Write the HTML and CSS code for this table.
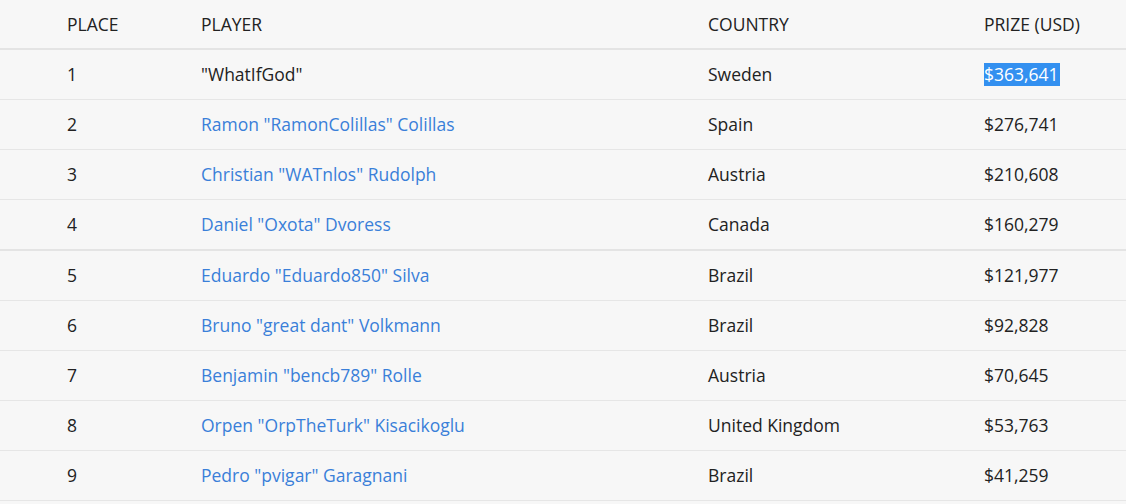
FILE: index.html
```html
<!DOCTYPE html>
<html>
<head>
<meta charset="utf-8">
<link rel="stylesheet" href="styles.css">
</head>
<body>
<table class="results">
  <colgroup>
    <col class="c-place"><col class="c-player"><col class="c-country"><col class="c-prize">
  </colgroup>
  <thead>
    <tr><th>PLACE</th><th>PLAYER</th><th>COUNTRY</th><th>PRIZE (USD)</th></tr>
  </thead>
  <tbody>
    <tr><td>1</td><td>"WhatIfGod"</td><td>Sweden</td><td><span class="sel">$363,641</span></td></tr>
    <tr><td>2</td><td><a href="#">Ramon "RamonColillas" Colillas</a></td><td>Spain</td><td>$276,741</td></tr>
    <tr><td>3</td><td><a href="#">Christian "WATnlos" Rudolph</a></td><td>Austria</td><td>$210,608</td></tr>
    <tr class="thick"><td>4</td><td><a href="#">Daniel "Oxota" Dvoress</a></td><td>Canada</td><td>$160,279</td></tr>
    <tr><td>5</td><td><a href="#">Eduardo "Eduardo850" Silva</a></td><td>Brazil</td><td>$121,977</td></tr>
    <tr><td>6</td><td><a href="#">Bruno "great dant" Volkmann</a></td><td>Brazil</td><td>$92,828</td></tr>
    <tr><td>7</td><td><a href="#">Benjamin "bencb789" Rolle</a></td><td>Austria</td><td>$70,645</td></tr>
    <tr><td>8</td><td><a href="#">Orpen "OrpTheTurk" Kisacikoglu</a></td><td>United Kingdom</td><td>$53,763</td></tr>
    <tr><td>9</td><td><a href="#">Pedro "pvigar" Garagnani</a></td><td>Brazil</td><td>$41,259</td></tr>
  </tbody>
</table>
</body>
</html>
```

FILE: styles.css
```css
html, body {
  margin: 0;
  padding: 0;
  background: #f7f7f7;
}
body {
  font-family: "Open Sans", "Liberation Sans", sans-serif;
  font-size: 17.5px;
  color: #222;
  overflow: hidden;
}
.results {
  width: 1126px;
  border-collapse: collapse;
  table-layout: fixed;
}
.c-place { width: 201px; }
.c-player { width: 507px; }
.c-country { width: 276px; }
.c-prize { width: 142px; }
.results th,
.results td {
  padding: 0;
  text-align: left;
  vertical-align: middle;
  white-space: nowrap;
}
.results th:first-child,
.results td:first-child {
  padding-left: 67px;
}
.results th {
  font-weight: 400;
  height: 48px;
  border-bottom: 2px solid #e4e4e4;
  line-height: 23px;
}
.results td {
  height: 49px;
  border-bottom: 1px solid #e6e6e6;
  line-height: 23px;
}
.results tr.thick td {
  border-bottom: 2px solid #e4e4e4;
  height: 49px;
}
.results a {
  color: #3a7fd9;
  text-decoration: none;
}
.sel {
  background: #3390f0;
  color: #fff;
  display: inline-block;
  line-height: 23px;
  padding-right: 1px;
}
```
